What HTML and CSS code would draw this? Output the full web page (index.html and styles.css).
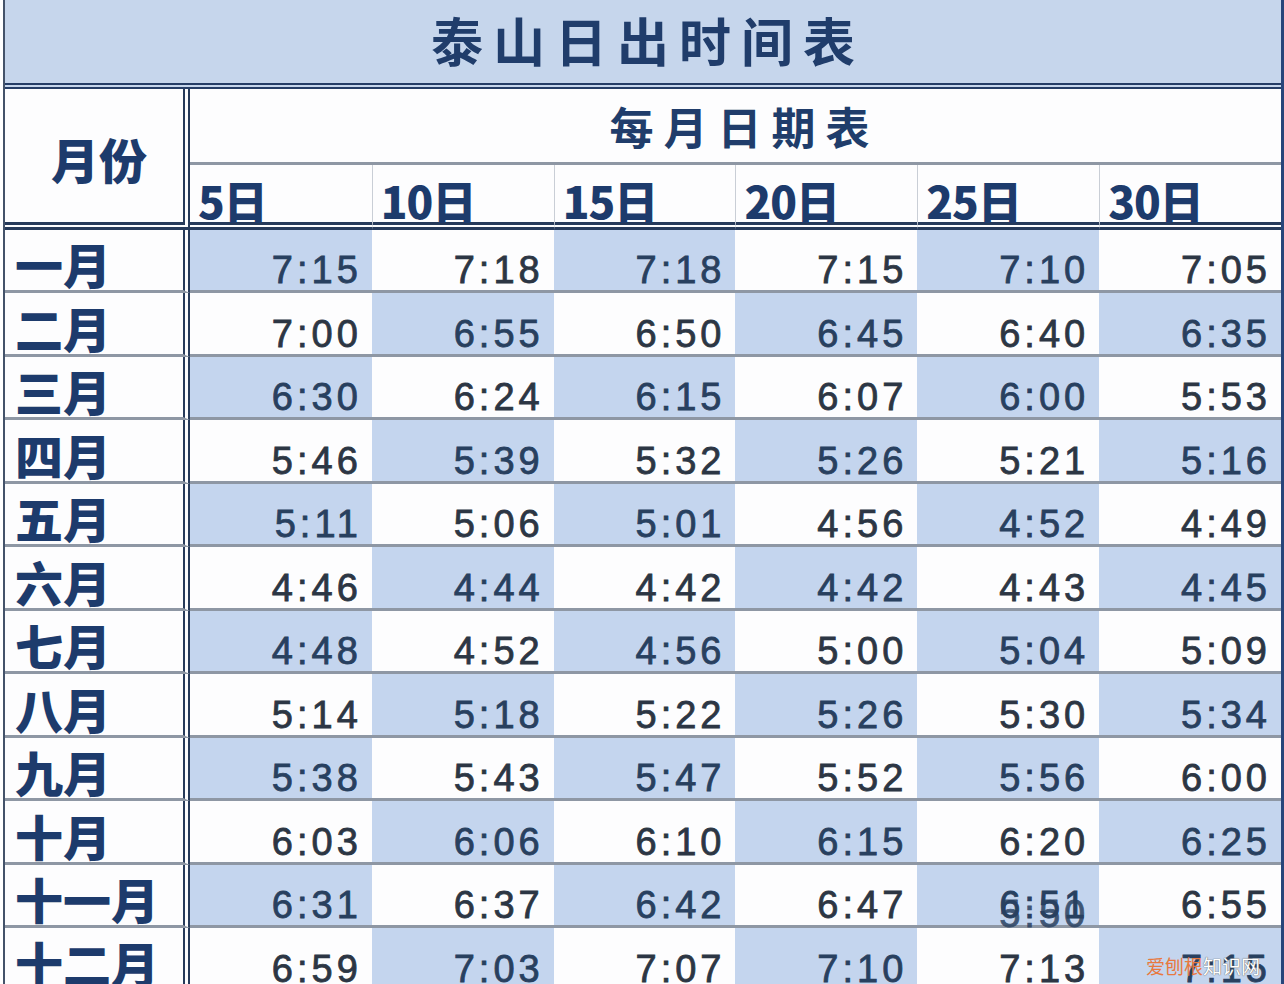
FILE: index.html
```html
<!DOCTYPE html>
<html lang="zh-CN">
<head>
<meta charset="utf-8">
<title>泰山日出时间表</title>
<link rel="stylesheet" href="styles.css">
</head>
<body>
<div class="sheet">
  <div class="title">泰山日出时间表</div>
  <div class="grid">
    <div class="mhead">月份</div>
    <div class="dhead">每月日期表</div>
    <div class="day first">5日</div>
    <div class="day">10日</div>
    <div class="day">15日</div>
    <div class="day">20日</div>
    <div class="day">25日</div>
    <div class="day">30日</div>

    <div class="mon">一月</div>
    <div class="t b">7:15</div><div class="t">7:18</div><div class="t b">7:18</div><div class="t">7:15</div><div class="t b">7:10</div><div class="t">7:05</div>

    <div class="mon">二月</div>
    <div class="t">7:00</div><div class="t b">6:55</div><div class="t">6:50</div><div class="t b">6:45</div><div class="t">6:40</div><div class="t b">6:35</div>

    <div class="mon">三月</div>
    <div class="t b">6:30</div><div class="t">6:24</div><div class="t b">6:15</div><div class="t">6:07</div><div class="t b">6:00</div><div class="t">5:53</div>

    <div class="mon">四月</div>
    <div class="t">5:46</div><div class="t b">5:39</div><div class="t">5:32</div><div class="t b">5:26</div><div class="t">5:21</div><div class="t b">5:16</div>

    <div class="mon">五月</div>
    <div class="t b">5:11</div><div class="t">5:06</div><div class="t b">5:01</div><div class="t">4:56</div><div class="t b">4:52</div><div class="t">4:49</div>

    <div class="mon">六月</div>
    <div class="t">4:46</div><div class="t b">4:44</div><div class="t">4:42</div><div class="t b">4:42</div><div class="t">4:43</div><div class="t b">4:45</div>

    <div class="mon">七月</div>
    <div class="t b">4:48</div><div class="t">4:52</div><div class="t b">4:56</div><div class="t">5:00</div><div class="t b">5:04</div><div class="t">5:09</div>

    <div class="mon">八月</div>
    <div class="t">5:14</div><div class="t b">5:18</div><div class="t">5:22</div><div class="t b">5:26</div><div class="t">5:30</div><div class="t b">5:34</div>

    <div class="mon">九月</div>
    <div class="t b">5:38</div><div class="t">5:43</div><div class="t b">5:47</div><div class="t">5:52</div><div class="t b">5:56</div><div class="t">6:00</div>

    <div class="mon">十月</div>
    <div class="t">6:03</div><div class="t b">6:06</div><div class="t">6:10</div><div class="t b">6:15</div><div class="t">6:20</div><div class="t b">6:25</div>

    <div class="mon">十一月</div>
    <div class="t b">6:31</div><div class="t">6:37</div><div class="t b">6:42</div><div class="t">6:47</div><div class="t b glitch">6:51<span class="ghost">5:50</span></div><div class="t">6:55</div>

    <div class="mon">十二月</div>
    <div class="t">6:59</div><div class="t b">7:03</div><div class="t">7:07</div><div class="t b">7:10</div><div class="t">7:13</div><div class="t b">7:15</div>
  </div>
  <div class="wm"><span class="wm-a">爱刨根</span><span class="wm-b">知识网</span></div>
</div>
</body>
</html>
```

FILE: styles.css
```css
html, body {
  margin: 0;
  padding: 0;
  background: #ffffff;
}

body {
  width: 1284px;
  height: 984px;
  overflow: hidden;
}

.sheet {
  position: relative;
  box-sizing: border-box;
  width: 1281px;
  height: 984px;
  margin-left: 3px;
  border-left: 2px solid #44536a;
  border-right: 3px solid #27457a;
  overflow: hidden;
  font-family: "Noto Sans CJK SC", "Noto Sans", sans-serif;
  background: #fdfdfe;
}

.title {
  box-sizing: border-box;
  height: 89px;
  background: #c6d6ec;
  border-bottom: 6px double #253d66;
  display: flex;
  align-items: center;
  justify-content: center;
  padding: 0 0 4px 10px;
  font-size: 52px;
  font-weight: 700;
  letter-spacing: 10px;
  color: #203d6b;
  line-height: 1;
}

.grid {
  display: grid;
  grid-template-columns: 185px repeat(6, 1fr);
  grid-template-rows: 76px 65px repeat(6, 63px 64px);
}

.grid > div {
  box-sizing: border-box;
  min-width: 0;
}

.mhead {
  grid-row: 1 / span 2;
  border-right: 7px double #263a5a;
  border-bottom: 8px double #263a5a;
  display: flex;
  align-items: center;
  justify-content: center;
  padding: 4px 0 0 10px;
  font-size: 48px;
  font-weight: 900;
  color: #1d3b6c;
  line-height: 1;
}

.dhead {
  grid-column: 2 / span 6;
  border-bottom: 3px solid #8e97a4;
  display: flex;
  align-items: center;
  justify-content: center;
  padding-left: 18px;
  font-size: 44px;
  font-weight: 700;
  letter-spacing: 10px;
  color: #203d6b;
  line-height: 1;
}

.day {
  border-bottom: 8px double #263a5a;
  border-left: 1px solid #c9ced6;
  display: flex;
  align-items: flex-end;
  padding: 0 0 0 8px;
  font-size: 44px;
  font-weight: 900;
  color: #1d3b6c;
  line-height: 1;
  letter-spacing: -1px;
}

.day.first {
  border-left: none;
}

.mon {
  border-bottom: 3px solid #8e97a4;
  border-right: 7px double #263a5a;
  display: flex;
  align-items: center;
  padding: 6px 0 0 10px;
  font-size: 48px;
  font-weight: 900;
  color: #1d3b6c;
  line-height: 1;
  white-space: nowrap;
}

.t {
  border-bottom: 3px solid #8e97a4;
  display: flex;
  align-items: flex-end;
  justify-content: flex-end;
  padding: 0 10px 1px 0;
  font-family: "Liberation Sans", Arial, sans-serif;
  font-size: 38px;
  letter-spacing: 4px;
  color: #2c3644;
  -webkit-text-stroke: 0.8px currentColor;
  line-height: 1;
}

.t.b {
  background: #c4d5ee;
  color: #28405f;
}

.glitch {
  position: relative;
}

.ghost {
  position: absolute;
  right: 10px;
  bottom: -8px;
  opacity: 0.85;
}

.wm {
  position: absolute;
  right: 21px;
  bottom: 9px;
  font-size: 19px;
  line-height: 1;
  letter-spacing: 0;
}

.wm-a {
  color: #e8793f;
}

.wm-b {
  color: #ffffff;
  text-shadow: 0 0 1px #6b6b6b, 0 0 1px #6b6b6b;
}
```
